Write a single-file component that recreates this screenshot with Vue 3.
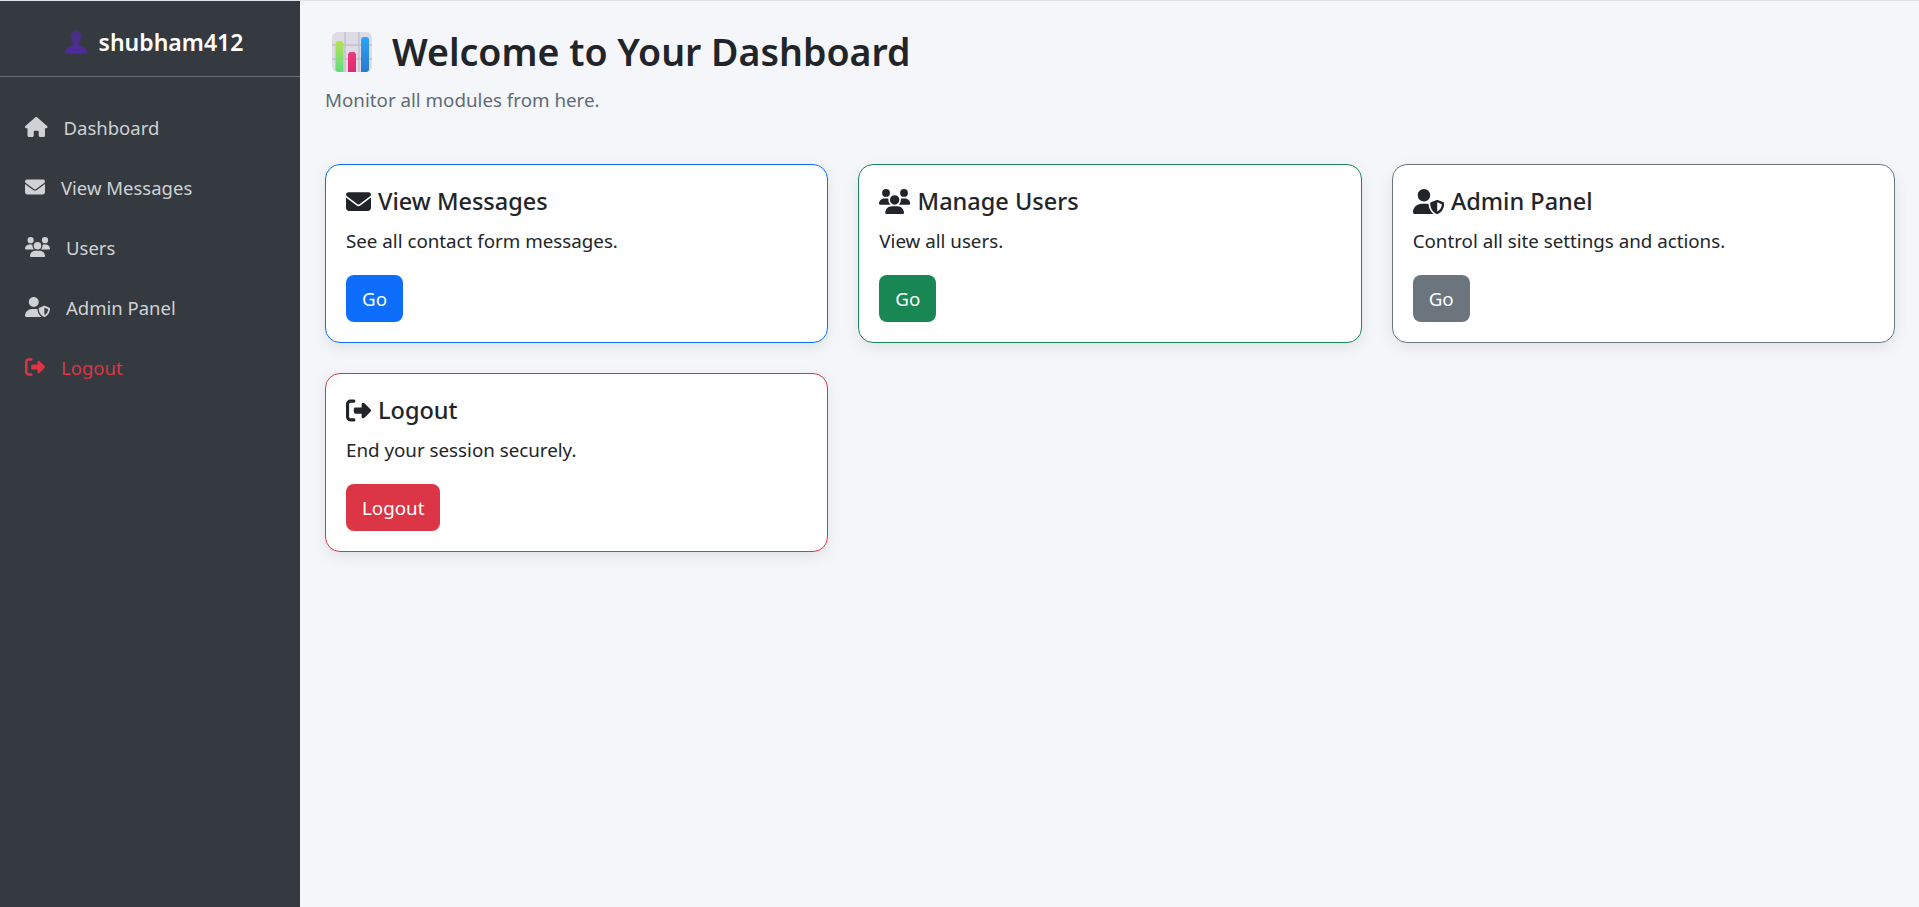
<script setup>
const icons = {
  house: { box: '0 0 576 512', d: 'M575.800 255.500c0 18-15 32.100-32 32.100h-32l.7 160.200c0 2.700-.2 5.400-.5 8.100V472c0 22.100-17.900 40-40 40H456c-1.100 0-2.200 0-3.300-.1c-1.400 .1-2.800 .1-4.200 .1H416 392c-22.100 0-40-17.900-40-40V448 384c0-17.700-14.300-32-32-32H256c-17.700 0-32 14.300-32 32v64 24c0 22.100-17.900 40-40 40H160 128.100c-1.500 0-3-.1-4.500-.2c-1.200 .1-2.400 .2-3.600 .2H104c-22.100 0-40-17.900-40-40V360c0-.9 0-1.900 .1-2.800V287.600H32c-18 0-32-14-32-32.100c0-9 3-17 10-24L266.400 8c7-7 15-8 22-8s15 2 21 7L564.800 231.500c8 7 12 15 11 24z' },
  envelope: { box: '0 0 512 512', d: 'M48 64C21.500 64 0 85.500 0 112c0 15.100 7.100 29.300 19.200 38.400L236.800 313.600c11.400 8.500 27 8.500 38.400 0L492.800 150.400c12.100-9.100 19.200-23.300 19.200-38.400c0-26.500-21.500-48-48-48H48zM0 176V384c0 35.300 28.700 64 64 64H448c35.300 0 64-28.700 64-64V176L294.400 339.200c-22.800 17.100-54 17.100-76.800 0L0 176z' },
  users: { box: '0 0 640 512', d: 'M144 0a80 80 0 1 1 0 160A80 80 0 1 1 144 0zM512 0a80 80 0 1 1 0 160A80 80 0 1 1 512 0zM0 298.700C0 239.800 47.800 192 106.700 192h42.700c15.900 0 31 3.500 44.600 9.700c-1.300 7.200-1.900 14.700-1.900 22.300c0 38.200 16.800 72.500 43.300 96c-.2 0-.4 0-.7 0H21.300C9.600 320 0 310.400 0 298.700zM405.300 320c-.2 0-.4 0-.7 0c26.600-23.500 43.300-57.800 43.300-96c0-7.600-.7-15-1.900-22.300c13.600-6.300 28.700-9.700 44.600-9.700h42.700C592.200 192 640 239.800 640 298.700c0 11.800-9.600 21.300-21.300 21.300H405.300zM224 224a96 96 0 1 1 192 0 96 96 0 1 1 -192 0zM128 485.300C128 411.700 187.700 352 261.300 352H378.700C452.300 352 512 411.700 512 485.300c0 14.700-11.900 26.700-26.700 26.700H154.700c-14.700 0-26.700-11.900-26.700-26.700z' },
  shield: { box: '0 0 640 512', d: 'M224 256A128 128 0 1 0 224 0a128 128 0 1 0 0 256zm-45.700 48C79.800 304 0 383.800 0 482.300C0 498.700 13.300 512 29.700 512H418.300c1.800 0 3.500-.2 5.300-.5c-76.300-55.100-99.800-141-103.100-200.200c-16.100-4.800-33.100-7.300-49.700-7.300H178.300zm308.800-78.300l-120 48C358 277.400 352 286.200 352 296c0 63.300 25.900 168.800 134.800 214.200c5.900 2.500 12.600 2.500 18.500 0C614.100 464.800 640 359.300 640 296c0-9.800-6-18.600-15.100-22.300l-120-48c-5.700-2.300-12.100-2.300-17.800 0zM591.400 312c-3.900 50.700-27.200 116.700-95.400 149.700V273.800L591.400 312z' },
  signout: { box: '0 0 512 512', d: 'M377.900 105.900L500.700 228.700c7.200 7.200 11.300 17.100 11.300 27.300s-4.100 20.100-11.300 27.300L377.900 406.100c-6.400 6.400-15 9.900-24 9.900c-18.700 0-33.900-15.200-33.900-33.900l0-62.100-128 0c-17.700 0-32-14.300-32-32l0-64c0-17.700 14.300-32 32-32l128 0 0-62.100c0-18.700 15.200-33.900 33.900-33.900c9 0 17.600 3.600 24 9.900zM160 96L96 96c-17.700 0-32 14.300-32 32l0 256c0 17.700 14.300 32 32 32l64 0c17.700 0 32 14.300 32 32s-14.300 32-32 32l-64 0c-53 0-96-43-96-96L0 128C0 75 43 32 96 32l64 0c17.700 0 32 14.300 32 32s-14.300 32-32 32z' }
}

const links = [
  { label: 'Dashboard', icon: icons.house },
  { label: 'View Messages', icon: icons.envelope },
  { label: 'Users', icon: icons.users },
  { label: 'Admin Panel', icon: icons.shield },
  { label: 'Logout', icon: icons.signout, danger: true }
]

const cards = [
  { title: 'View Messages', text: 'See all contact form messages.', button: 'Go', tone: 'primary', icon: icons.envelope },
  { title: 'Manage Users', text: 'View all users.', button: 'Go', tone: 'success', icon: icons.users },
  { title: 'Admin Panel', text: 'Control all site settings and actions.', button: 'Go', tone: 'secondary', icon: icons.shield },
  { title: 'Logout', text: 'End your session securely.', button: 'Logout', tone: 'danger', icon: icons.signout }
]
</script>

<template>
  <div class="layout">
    <aside class="sidebar">
      <div class="brand">
        <svg class="brand-emoji" viewBox="0 0 24 24" aria-hidden="true">
          <defs>
            <linearGradient id="bust" x1="0" y1="0" x2="0" y2="1">
              <stop offset="0" stop-color="#46307c" />
              <stop offset="1" stop-color="#4f2a9c" />
            </linearGradient>
          </defs>
          <path fill="url(#bust)" d="M12 .5c3.200 0 5.200 2 5.200 5.200l.5 1.600c0 .8-.5 1.400-1 1.500-.3 1.600-1 3-2 3.900-.5.500-.5 1.800.3 2.300 2.600 1.500 6.400 2.200 7.800 6.200.3 1-.2 2.300-1.300 2.300H2.500c-1.100 0-1.600-1.300-1.300-2.300 1.400-4 5.200-4.700 7.800-6.200.8-.5.8-1.800.3-2.300-1-.9-1.700-2.300-2-3.900-.5-.1-1-.7-1-1.500l.5-1.600C6.800 2.500 8.800.5 12 .5z" />
        </svg>
        <span>shubham412</span>
      </div>
      <nav class="nav">
        <a v-for="link in links" :key="link.label" href="#" class="nav-link" :class="{ danger: link.danger }">
          <svg class="nav-icon" :viewBox="link.icon.box" aria-hidden="true"><path fill="currentColor" :d="link.icon.d" /></svg>
          <span>{{ link.label }}</span>
        </a>
      </nav>
    </aside>

    <main class="main">
      <header class="page-head">
        <h1 class="page-title">
          <svg class="title-emoji" viewBox="0 0 40 40" aria-hidden="true">
            <defs>
              <linearGradient id="barGreen" x1="0" y1="0" x2="0" y2="1">
                <stop offset="0" stop-color="#b5e352" />
                <stop offset="1" stop-color="#5fdc82" />
              </linearGradient>
              <linearGradient id="barPink" x1="0" y1="0" x2="0" y2="1">
                <stop offset="0" stop-color="#f0387c" />
                <stop offset="1" stop-color="#dd2a72" />
              </linearGradient>
              <linearGradient id="barBlue" x1="0" y1="0" x2="0" y2="1">
                <stop offset="0" stop-color="#29a5f7" />
                <stop offset="1" stop-color="#2b78d0" />
              </linearGradient>
            </defs>
            <rect width="40" height="40" rx="6" fill="#dedae6" />
            <path d="M13 0v40M27 0v40M0 13h40M0 27h40" stroke="#b9b5c2" stroke-width="1" fill="none" />
            <path fill="url(#barGreen)" d="M3.500 12a3 3 0 0 1 3-3h2a3 3 0 0 1 3 3v28h-5a3 3 0 0 1-3-3z" />
            <path fill="url(#barPink)" d="M16 23a3 3 0 0 1 3-3h2a3 3 0 0 1 3 3v17h-8z" />
            <path fill="url(#barBlue)" d="M29 8a3 3 0 0 1 3-3h2a3 3 0 0 1 3 3v29a3 3 0 0 1-3 3h-5z" />
          </svg>
          <span>Welcome to Your Dashboard</span>
        </h1>
        <p class="page-sub">Monitor all modules from here.</p>
      </header>

      <section class="cards">
        <article v-for="card in cards" :key="card.title" class="card" :class="card.tone">
          <h5 class="card-title">
            <svg class="card-icon" :viewBox="card.icon.box" aria-hidden="true"><path fill="currentColor" :d="card.icon.d" /></svg>
            <span>{{ card.title }}</span>
          </h5>
          <p class="card-text">{{ card.text }}</p>
          <a href="#" class="btn">{{ card.button }}</a>
        </article>
      </section>
    </main>
  </div>
</template>

<style scoped>
.layout {
  display: flex;
  min-height: 100vh;
  box-sizing: border-box;
  border-top: 1px solid #dfe1e6;
  background: #f4f6f9;
  color: #212529;
  font-family: "Noto Sans", "Open Sans", sans-serif;
}

.sidebar {
  width: 300px;
  flex-shrink: 0;
  background: #343a40;
}

.brand {
  height: 76px;
  box-sizing: border-box;
  padding: 7px 0 0 7px;
  display: flex;
  align-items: center;
  justify-content: center;
  gap: 11px;
  border-bottom: 1px solid #6a6e73;
  color: #fff;
  font-size: 23px;
  font-weight: 600;
}

.brand-emoji {
  width: 24px;
  height: 24px;
}

.nav {
  display: flex;
  flex-direction: column;
  padding-top: 20px;
}

.nav-link {
  height: 60px;
  display: flex;
  align-items: center;
  gap: 16px;
  padding-left: 25px;
  color: #cfd1d3;
  font-size: 18.5px;
  text-decoration: none;
}

.nav-link.danger {
  color: #dc3545;
}

.nav-icon {
  height: 20px;
  width: auto;
  flex-shrink: 0;
}

.main {
  flex: 1;
  min-width: 0;
  padding: 24px 24px 24px 25px;
}

.page-title {
  margin: 0;
  display: flex;
  align-items: center;
  gap: 20px;
  padding-left: 7px;
  font-size: 37.5px;
  font-weight: 600;
  line-height: 54px;
}

.title-emoji {
  width: 40px;
  height: 40px;
  flex-shrink: 0;
}

.page-sub {
  margin: 6px 0 0;
  color: #5f6b76;
  font-size: 18.75px;
  line-height: 30px;
}

.cards {
  margin-top: 49px;
  display: grid;
  grid-template-columns: repeat(3, 1fr);
  gap: 30px;
}

.card {
  height: 179px;
  box-sizing: border-box;
  padding: 20px;
  background: #fff;
  border: 1px solid;
  border-radius: 15px;
  box-shadow: 0 5px 15px rgba(0, 0, 0, 0.08);
}

.card-title {
  margin: 0;
  display: flex;
  align-items: center;
  gap: 7px;
  padding-top: 1px;
  font-size: 23.5px;
  font-weight: 500;
  line-height: 30px;
}

.card-icon {
  height: 25px;
  width: auto;
  flex-shrink: 0;
}

.card-text {
  margin: 10px 0 0;
  font-size: 18.75px;
  line-height: 30px;
}

.btn {
  display: inline-block;
  margin-top: 19px;
  padding: 8.5px 16px;
  border-radius: 8px;
  color: #fff;
  font-size: 18.75px;
  line-height: 30px;
  text-decoration: none;
}

.primary { border-color: #0d6efd; }
.primary .btn { background: #0d6efd; }
.success { border-color: #198754; }
.success .btn { background: #198754; }
.secondary { border-color: #6c757d; }
.secondary .btn { background: #6c757d; }
.danger { border-color: #dc3545; }
.danger .btn { background: #dc3545; }
</style>
